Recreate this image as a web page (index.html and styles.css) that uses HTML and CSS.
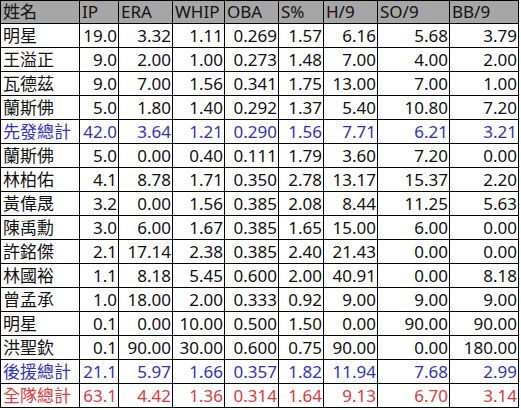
FILE: index.html
```html
<!DOCTYPE html>
<html lang="zh-Hant">
<head>
<meta charset="utf-8">
<title>投手成績</title>
<link rel="stylesheet" href="styles.css">
</head>
<body>
<table class="stats">
  <colgroup>
    <col class="c-name"><col class="c-ip"><col class="c-era"><col class="c-whip"><col class="c-oba"><col class="c-s"><col class="c-h9"><col class="c-so9"><col class="c-bb9">
  </colgroup>
  <thead>
    <tr class="head"><th>姓名</th><th>IP</th><th>ERA</th><th>WHIP</th><th>OBA</th><th>S%</th><th>H/9</th><th>SO/9</th><th>BB/9</th></tr>
  </thead>
  <tbody>
    <tr><td>明星</td><td>19.0</td><td>3.32</td><td>1.11</td><td>0.269</td><td>1.57</td><td>6.16</td><td>5.68</td><td>3.79</td></tr>
    <tr><td>王溢正</td><td>9.0</td><td>2.00</td><td>1.00</td><td>0.273</td><td>1.48</td><td>7.00</td><td>4.00</td><td>2.00</td></tr>
    <tr><td>瓦德茲</td><td>9.0</td><td>7.00</td><td>1.56</td><td>0.341</td><td>1.75</td><td>13.00</td><td>7.00</td><td>1.00</td></tr>
    <tr><td>蘭斯佛</td><td>5.0</td><td>1.80</td><td>1.40</td><td>0.292</td><td>1.37</td><td>5.40</td><td>10.80</td><td>7.20</td></tr>
    <tr class="sum-blue"><td>先發總計</td><td>42.0</td><td>3.64</td><td>1.21</td><td>0.290</td><td>1.56</td><td>7.71</td><td>6.21</td><td>3.21</td></tr>
    <tr><td>蘭斯佛</td><td>5.0</td><td>0.00</td><td>0.40</td><td>0.111</td><td>1.79</td><td>3.60</td><td>7.20</td><td>0.00</td></tr>
    <tr><td>林柏佑</td><td>4.1</td><td>8.78</td><td>1.71</td><td>0.350</td><td>2.78</td><td>13.17</td><td>15.37</td><td>2.20</td></tr>
    <tr><td>黃偉晟</td><td>3.2</td><td>0.00</td><td>1.56</td><td>0.385</td><td>2.08</td><td>8.44</td><td>11.25</td><td>5.63</td></tr>
    <tr><td>陳禹勳</td><td>3.0</td><td>6.00</td><td>1.67</td><td>0.385</td><td>1.65</td><td>15.00</td><td>6.00</td><td>0.00</td></tr>
    <tr><td>許銘傑</td><td>2.1</td><td>17.14</td><td>2.38</td><td>0.385</td><td>2.40</td><td>21.43</td><td>0.00</td><td>0.00</td></tr>
    <tr><td>林國裕</td><td>1.1</td><td>8.18</td><td>5.45</td><td>0.600</td><td>2.00</td><td>40.91</td><td>0.00</td><td>8.18</td></tr>
    <tr><td>曾孟承</td><td>1.0</td><td>18.00</td><td>2.00</td><td>0.333</td><td>0.92</td><td>9.00</td><td>9.00</td><td>9.00</td></tr>
    <tr><td>明星</td><td>0.1</td><td>0.00</td><td>10.00</td><td>0.500</td><td>1.50</td><td>0.00</td><td>90.00</td><td>90.00</td></tr>
    <tr><td>洪聖欽</td><td>0.1</td><td>90.00</td><td>30.00</td><td>0.600</td><td>0.75</td><td>90.00</td><td>0.00</td><td>180.00</td></tr>
    <tr class="sum-blue"><td>後援總計</td><td>21.1</td><td>5.97</td><td>1.66</td><td>0.357</td><td>1.82</td><td>11.94</td><td>7.68</td><td>2.99</td></tr>
    <tr class="sum-red"><td>全隊總計</td><td>63.1</td><td>4.42</td><td>1.36</td><td>0.314</td><td>1.64</td><td>9.13</td><td>6.70</td><td>3.14</td></tr>
  </tbody>
</table>
</body>
</html>
```
FILE: styles.css
```css
html, body {
  margin: 0;
  padding: 0;
  background: #ffffff;
}

.stats {
  border-collapse: collapse;
  table-layout: fixed;
  width: 519px;
  font-family: "Noto Sans", "Noto Sans CJK TC", sans-serif;
  font-size: 17px;
  color: #111;
}

.c-name { width: 79px; }
.c-ip { width: 39px; }
.c-era { width: 54px; }
.c-whip { width: 52px; }
.c-oba { width: 54px; }
.c-s { width: 45px; }
.c-h9 { width: 54px; }
.c-so9 { width: 72px; }
.c-bb9 { width: 69px; }

.stats th,
.stats td {
  border: 1px solid #000;
  padding: 0 1px 0 2px;
  line-height: 20px;
  white-space: nowrap;
  overflow: hidden;
}

.stats th {
  background: #a6a6a6;
  font-weight: normal;
  text-align: left;
  height: 22px;
}

.stats td {
  text-align: right;
  height: 23px;
}

.stats td:first-child {
  text-align: left;
}

.sum-blue td {
  color: #3232c2;
}

.sum-red td {
  color: #e03a3a;
}
```
